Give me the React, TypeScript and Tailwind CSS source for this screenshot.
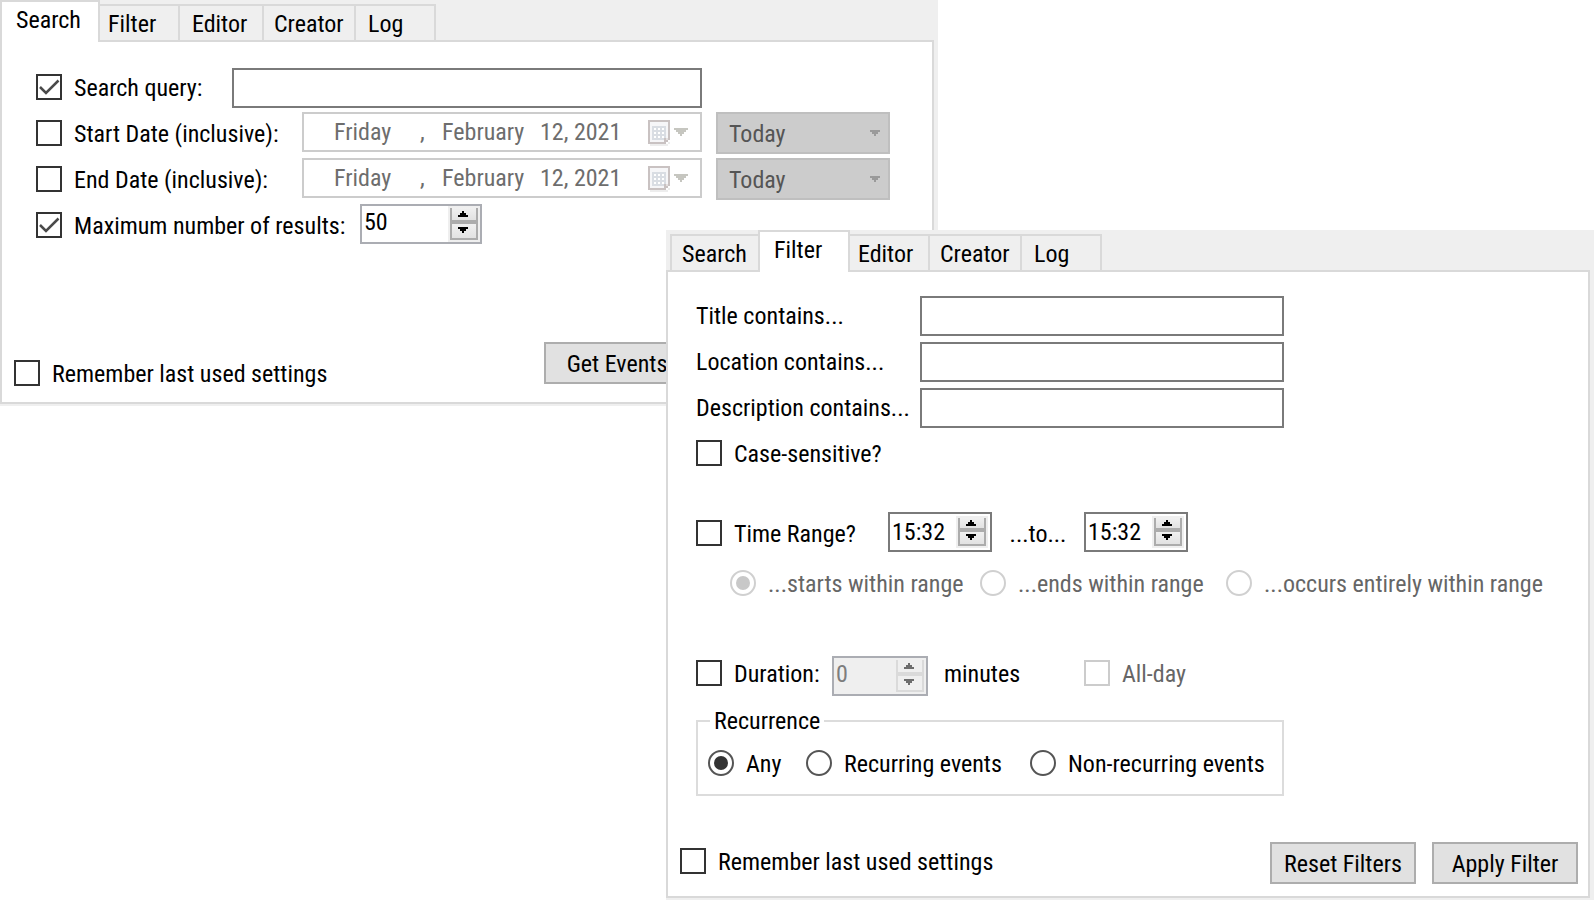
import { useState, type ReactNode } from "react";

const TAB_LINE = "border-[#d9d9d9]";

type Tab = { name: string; size: string };

function Tabs({ tabs, active, inset }: { tabs: Tab[]; active: string; inset: string }) {
  return (
    <div role="tablist" className={`relative z-10 -mb-[2px] flex h-[42px] items-end ${inset}`}>
      {tabs.map((tab, i) => {
        const on = tab.name === active;
        return (
          <button
            key={tab.name}
            type="button"
            role="tab"
            aria-selected={on}
            className={`flex items-start border-2 pt-1 text-left leading-7 ${TAB_LINE} ${tab.size} ${
              i > 0 ? "-ml-[2px]" : ""
            } ${on ? "relative z-10 h-[42px] border-b-0 bg-white" : "h-[38px] bg-[#efefef]"}`}
          >
            {tab.name}
          </button>
        );
      })}
    </div>
  );
}

function Window({ tabs, active, inset, className, children }: {
  tabs: Tab[];
  active: string;
  inset: string;
  className: string;
  children: ReactNode;
}) {
  return (
    <section className={`bg-[#efefef] pr-1 pb-[2px] ${className}`}>
      <Tabs tabs={tabs} active={active} inset={inset} />
      <div role="tabpanel" aria-label={active} className={`border-2 bg-white ${TAB_LINE}`}>
        {children}
      </div>
    </section>
  );
}

function Check({ label, checked = false, disabled = false, className = "h-[46px]" }: {
  label: string;
  checked?: boolean;
  disabled?: boolean;
  className?: string;
}) {
  const [on, setOn] = useState(checked);
  return (
    <label className={`flex shrink-0 items-center gap-3 whitespace-nowrap leading-7 ${disabled ? "text-[#666666]" : ""} ${className}`}>
      <span className="grid shrink-0">
        <input
          type="checkbox"
          checked={on}
          disabled={disabled}
          onChange={() => setOn(!on)}
          className="col-start-1 row-start-1 size-[26px] appearance-none border-2 border-[#333333] bg-white disabled:border-[#cccccc]"
        />
        {on && (
          <svg viewBox="0 0 26 26" className="pointer-events-none col-start-1 row-start-1 size-[26px]" fill="none" stroke="#4a4a4a" strokeWidth="2.500">
            <path d="M4 13 L10 19 L22.500 6.500" />
          </svg>
        )}
      </span>
      <span className="pt-[2px]">{label}</span>
    </label>
  );
}

function Radio({ name, label, checked, disabled = false, className = "" }: {
  name: string;
  label: string;
  checked?: boolean;
  disabled?: boolean;
  className?: string;
}) {
  return (
    <label className={`flex h-[46px] shrink-0 items-center gap-3 whitespace-nowrap leading-7 ${disabled ? "text-[#666666]" : ""} ${className}`}>
      <span className="grid shrink-0 place-items-center">
        <input
          type="radio"
          name={name}
          defaultChecked={checked}
          disabled={disabled}
          className="peer col-start-1 row-start-1 size-[26px] appearance-none rounded-full border-2 border-[#555555] bg-white disabled:border-[#d0d0d0]"
        />
        <span className="pointer-events-none col-start-1 row-start-1 hidden size-[14px] rounded-full bg-[#333333] peer-checked:block peer-disabled:bg-[#c8c8c8]" />
      </span>
      <span className="pt-[2px]">{label}</span>
    </label>
  );
}

function Spin({ label, value, frame, text, disabled = false }: {
  label: string;
  value: string;
  frame: string;
  text: string;
  disabled?: boolean;
}) {
  const line = disabled ? "border-[#dadada]" : "border-[#acacac]";
  const fill = disabled ? "bg-[#efefef]" : "bg-linear-to-b from-[#f0f0f0] to-[#e2e2e2]";
  const arrow = disabled ? "#6d6d6d" : "#000000";
  return (
    <div className={`flex h-10 shrink-0 items-stretch border-2 ${frame}`}>
      <input
        type="text"
        aria-label={label}
        defaultValue={value}
        disabled={disabled}
        className={`min-w-0 flex-1 bg-transparent leading-7 outline-none disabled:text-[#7d7d7d] ${text}`}
      />
      <div className="flex w-8 flex-col bg-[#efefef] p-[2px]">
        <button type="button" aria-label={`${label} up`} disabled={disabled} className={`flex flex-1 items-center justify-center border-x-2 border-b-2 pr-[2px] ${line} ${fill}`}>
          <svg viewBox="0 0 10 6" width="10" height="6" fill={arrow} shapeRendering="crispEdges">
            <path d="M4 0h2v2h2v2h2v2H0V4h2V2h2z" />
          </svg>
        </button>
        <button type="button" aria-label={`${label} down`} disabled={disabled} className={`flex flex-1 items-center justify-center border-2 pr-[2px] pb-[2px] ${line} ${fill}`}>
          <svg viewBox="0 0 10 6" width="10" height="6" fill={arrow} shapeRendering="crispEdges">
            <path d="M0 0h10v2H8v2H6v2H4V4H2V2H0z" />
          </svg>
        </button>
      </div>
    </div>
  );
}

function DatePicker({ label }: { label: string }) {
  return (
    <button
      type="button"
      disabled
      aria-label={label}
      className="mt-[2px] flex h-10 w-[400px] shrink-0 items-start border-2 border-[#cccccc] bg-white pl-[30px] text-left leading-[36px] text-[#6d6d6d]"
    >
      <span className="w-[86px]">Friday</span>
      <span className="w-[22px]">,</span>
      <span className="w-[98px]">February</span>
      <span className="w-[108px]">12, 2021</span>
      <svg viewBox="0 0 42 28" width="42" height="28" className="mt-[6px]" fill="none" shapeRendering="crispEdges">
        <path d="M2 24h18v2H2zM20 22h2v2h-2z" fill="#ededed" />
        <path d="M0 0h22v20h-2v2h-2v2H0z" fill="#c9c2c2" />
        <path d="M2 2h18v16h-4v4H2z" fill="#f6f6f8" />
        <path d="M18 20h2v-2h-2z" fill="#e4e0e0" />
        <path d="M4 6h14v12h-2v2H4z" fill="#d9dde3" />
        <path d="M6 8h2v2H6zM10 8h2v2h-2zM14 8h2v2h-2zM6 12h2v2H6zM10 12h2v2h-2zM14 12h2v2h-2zM6 16h2v2H6zM10 16h2v2h-2zM14 16h2v2h-2z" fill="#ffffff" />
        <path d="M26 8h14v2h-2v2h-2v2h-2v2h-2v-2h-2v-2h-2v-2h-2z" fill="#c6c6c0" />
      </svg>
    </button>
  );
}

function DayPreset({ label }: { label: string }) {
  return (
    <div className="mt-[2px] ml-[14px] grid w-[174px] shrink-0">
      <select
        aria-label={label}
        disabled
        className="col-start-1 row-start-1 h-[42px] appearance-none border-2 border-[#bfbfbf] bg-[#cccccc] pt-[2px] pl-[11px] leading-7 text-[#555555] opacity-100"
      >
        <option>Today</option>
      </select>
      <svg viewBox="0 0 10 6" width="10" height="6" fill="#9a9a9a" shapeRendering="crispEdges" className="pointer-events-none col-start-1 row-start-1 mr-[10px] self-center justify-self-end">
        <path d="M0 0h10v2H8v2H6v2H4V4H2V2H0z" />
      </svg>
    </div>
  );
}

function PushButton({ children }: { children: ReactNode }) {
  return (
    <button type="button" className="h-[42px] w-[146px] shrink-0 border-2 border-[#adadad] bg-[#e1e1e1] pt-[2px] leading-7 whitespace-nowrap">
      {children}
    </button>
  );
}

function SearchWindow() {
  const tabs = [
    { name: "Search", size: "w-[100px] pl-[14px]" },
    { name: "Filter", size: "w-[82px] pl-2" },
    { name: "Editor", size: "w-[86px] pl-3" },
    { name: "Creator", size: "w-[94px] pl-[10px]" },
    { name: "Log", size: "w-[82px] pl-3" },
  ];
  return (
    <Window tabs={tabs} active="Search" inset="" className="w-[938px]">
      <div className="pt-[22px] pl-[34px]">
        <div className="flex items-start">
          <Check label="Search query:" checked className="h-[46px] w-[196px]" />
          <input type="text" aria-label="Search query text" className="mt-1 h-10 w-[470px] border-2 border-[#7a7a7a] bg-white px-1 outline-none" />
        </div>
        <div className="flex items-start">
          <Check label="Start Date (inclusive):" className="h-[46px] w-[266px]" />
          <DatePicker label="Start date" />
          <DayPreset label="Start date preset" />
        </div>
        <div className="flex items-start">
          <Check label="End Date (inclusive):" className="h-[46px] w-[266px]" />
          <DatePicker label="End date" />
          <DayPreset label="End date preset" />
        </div>
        <div className="flex items-start">
          <Check label="Maximum number of results:" checked className="h-[46px] w-[324px]" />
          <div className="mt-[2px]">
            <Spin label="Maximum results" value="50" frame="w-[122px] border-[#abadb3] bg-white" text="pb-1 pl-[2px]" />
          </div>
        </div>
      </div>
      <div className="mt-[94px] flex items-start pb-4 pl-3">
        <Check label="Remember last used settings" className="mt-[18px] h-[26px] w-[530px]" />
        <PushButton>Get Events</PushButton>
      </div>
    </Window>
  );
}

function FilterWindow() {
  const tabs = [
    { name: "Search", size: "w-[90px] pl-[10px]" },
    { name: "Filter", size: "w-[92px] pl-[14px]" },
    { name: "Editor", size: "w-[82px] pl-2" },
    { name: "Creator", size: "w-[94px] pl-[10px]" },
    { name: "Log", size: "w-[82px] pl-3" },
  ];
  const timeFrame = "w-[104px] border-[#7a7a7a] bg-white p-[2px]";
  return (
    <Window tabs={tabs} active="Filter" inset="pl-1" className="relative -mt-[176px] ml-[666px] min-w-[928px]">
      <div className="pt-5 pl-7">
        {["Title contains...", "Location contains...", "Description contains..."].map((label) => (
          <label key={label} className="flex h-[46px] items-start">
            <span className="w-[224px] leading-[48px] whitespace-nowrap">{label}</span>
            <input type="text" className="mt-1 h-10 w-[364px] border-2 border-[#7a7a7a] bg-white px-1 outline-none" />
          </label>
        ))}
        <Check label="Case-sensitive?" />
        <div className="mt-[34px] flex h-[46px] items-start">
          <Check label="Time Range?" className="h-[46px] w-[192px]" />
          <div className="mt-[2px]">
            <Spin label="Range start" value="15:32" frame={timeFrame} text="" />
          </div>
          <span className="w-[92px] text-center leading-[48px]">...to...</span>
          <div className="mt-[2px]">
            <Spin label="Range end" value="15:32" frame={timeFrame} text="" />
          </div>
        </div>
        <div className="mt-1 flex pl-[34px]">
          <Radio name="range" label="...starts within range" checked disabled className="w-[250px]" />
          <Radio name="range" label="...ends within range" disabled className="w-[246px]" />
          <Radio name="range" label="...occurs entirely within range" disabled />
        </div>
        <div className="mt-11 flex h-[46px] items-start">
          <Check label="Duration:" className="h-[46px] w-[136px]" />
          <div className="mt-[6px]">
            <Spin label="Duration" value="0" frame="w-[96px] border-[#abadb3] bg-[#efefef]" text="pb-1 pl-[2px]" disabled />
          </div>
          <span className="w-[156px] pl-4 leading-[48px]">minutes</span>
          <Check label="All-day" disabled />
        </div>
        <fieldset className="mt-[11px] w-[588px] border-2 border-[#dcdcdc] pb-2 pl-[10px]">
          <legend className="ml-[2px] px-1 leading-7">Recurrence</legend>
          <div className="mt-[5px] flex">
            <Radio name="recurrence" label="Any" checked className="w-[98px]" />
            <Radio name="recurrence" label="Recurring events" className="w-[224px]" />
            <Radio name="recurrence" label="Non-recurring events" />
          </div>
        </fieldset>
      </div>
      <div className="mt-[46px] flex items-start gap-4 pr-[10px] pb-3 pl-3">
        <Check label="Remember last used settings" className="mt-[6px] mr-auto h-[26px]" />
        <PushButton>Reset Filters</PushButton>
        <PushButton>Apply Filter</PushButton>
      </div>
    </Window>
  );
}

export default function App() {
  return (
    <main className="min-h-screen bg-white font-['Roboto_Condensed','Roboto','Liberation_Sans',sans-serif] text-[24px] text-black">
      <SearchWindow />
      <FilterWindow />
    </main>
  );
}
